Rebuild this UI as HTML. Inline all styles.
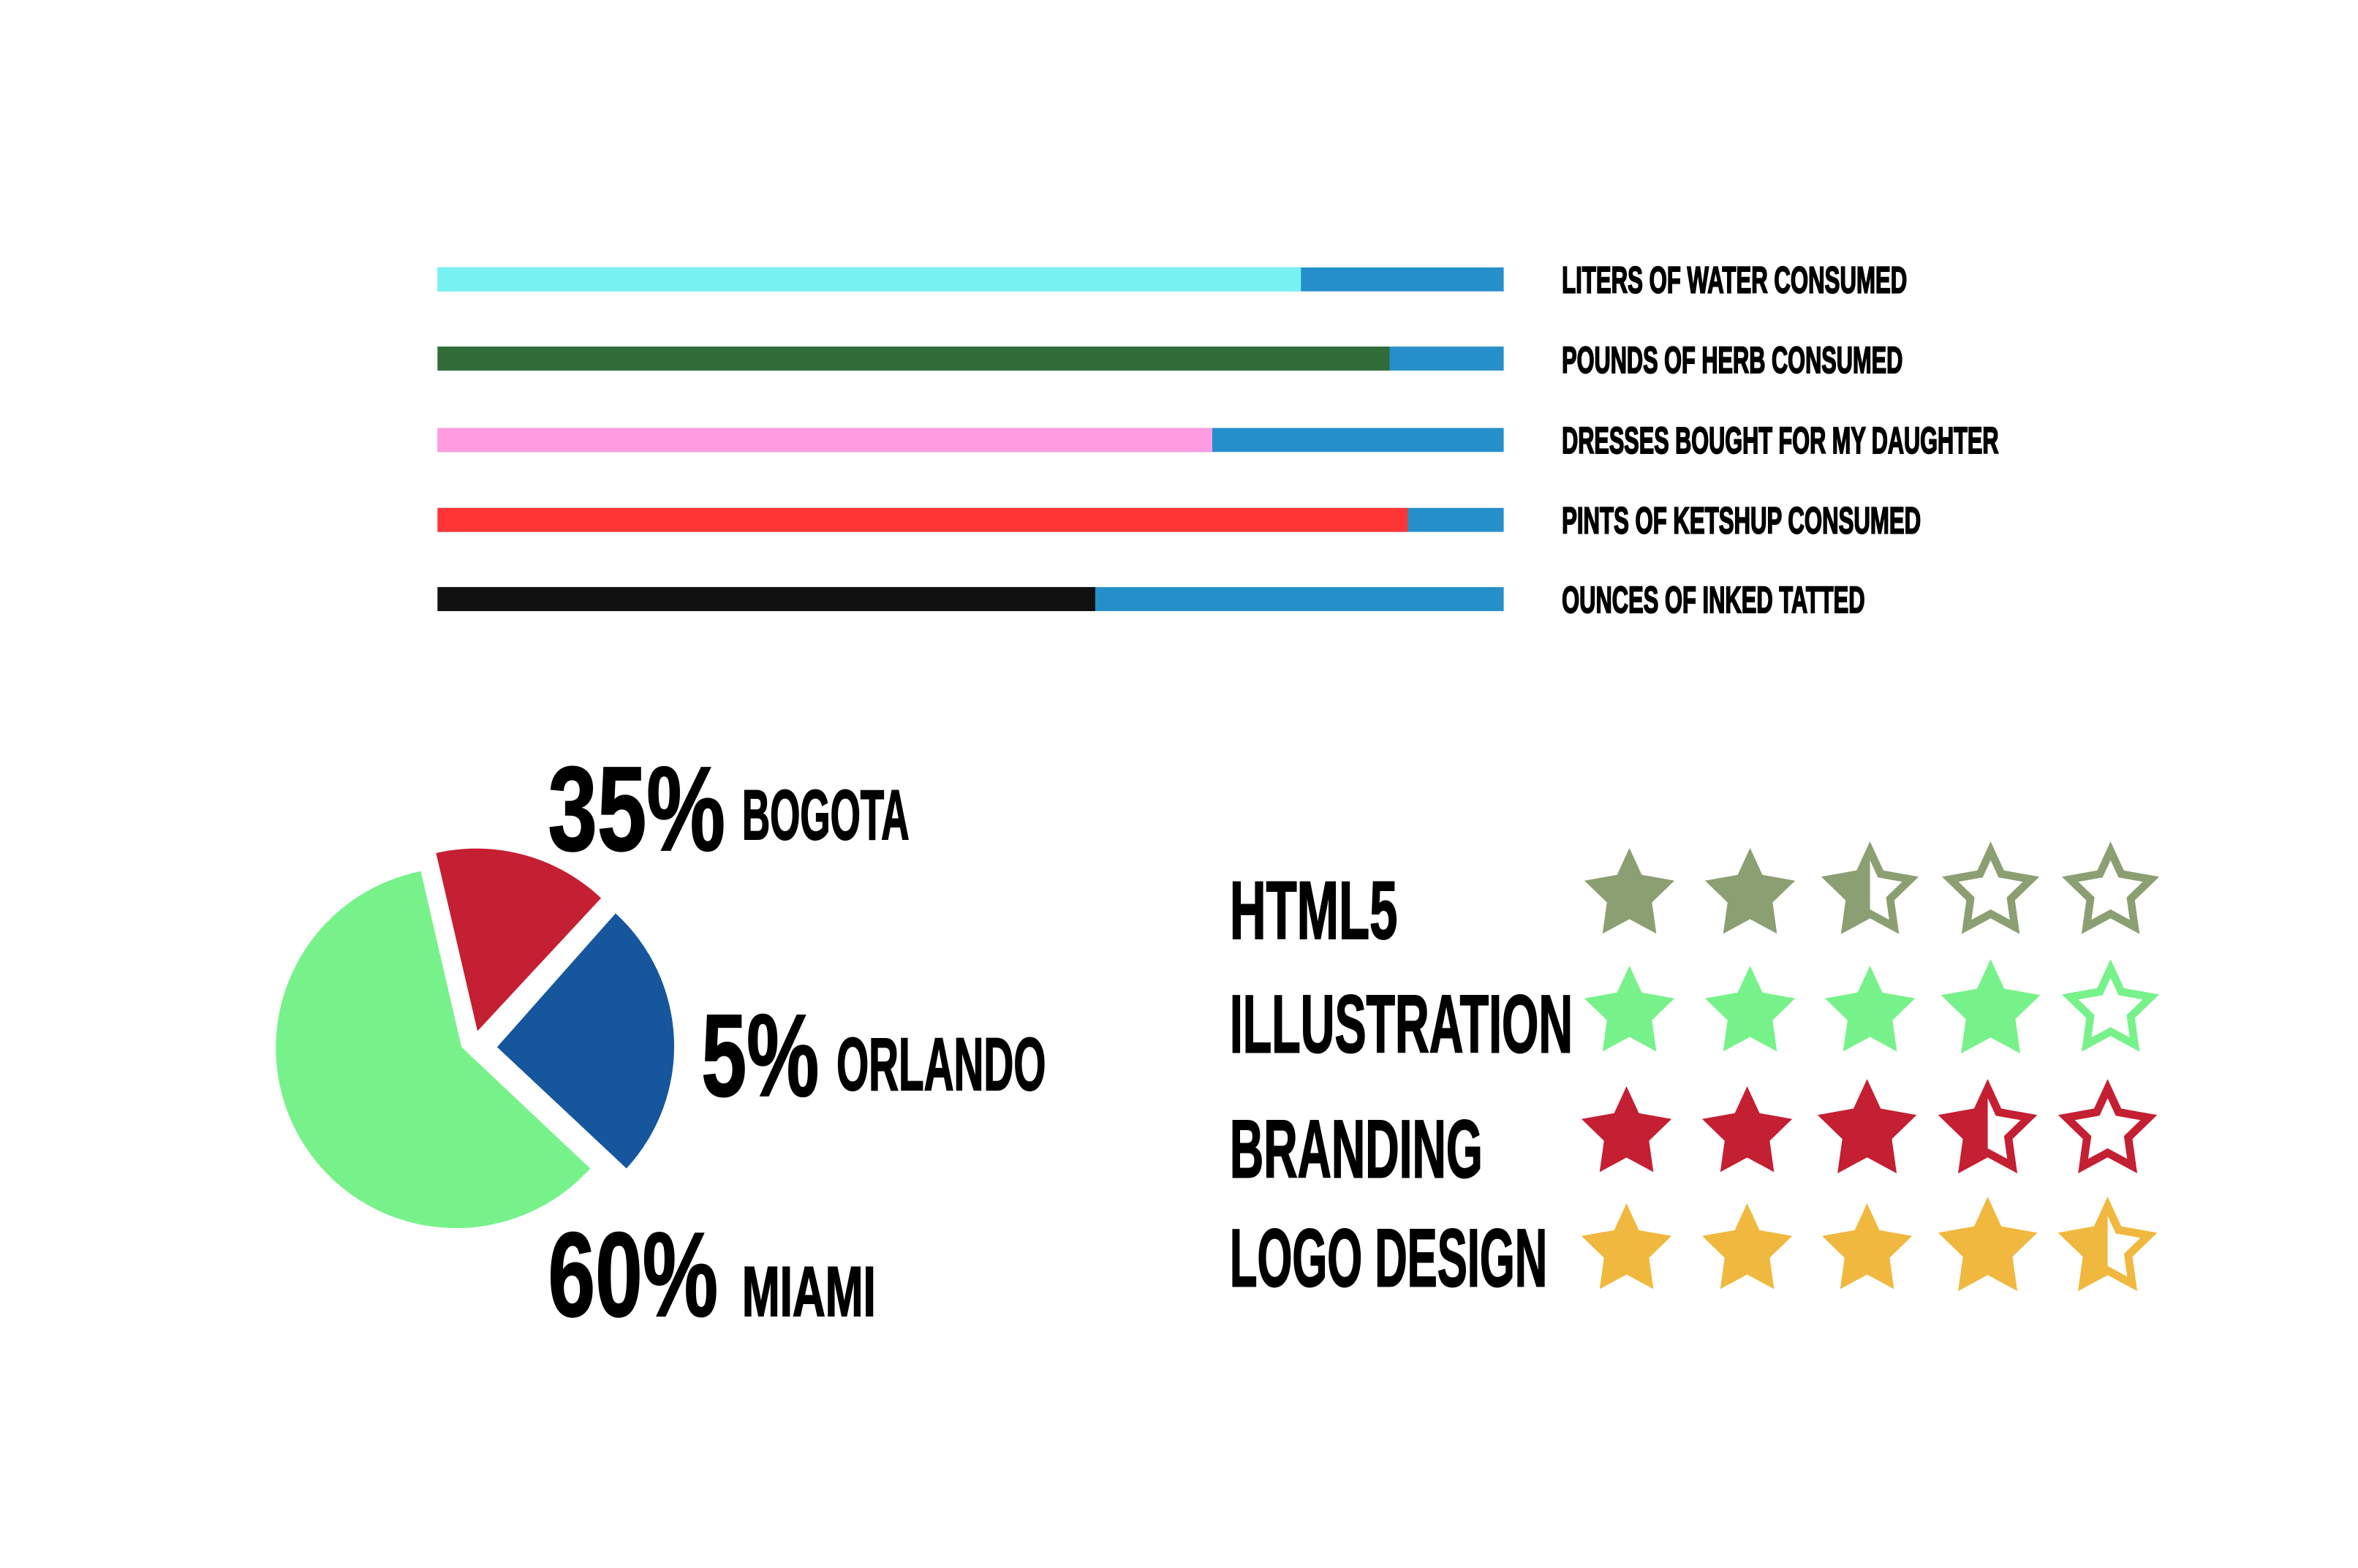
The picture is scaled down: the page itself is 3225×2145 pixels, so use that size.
<!DOCTYPE html>
<html><head><meta charset="utf-8"><style>html,body{margin:0;padding:0;background:#fff}svg{display:block}text{font-family:"Liberation Sans Narrow","Liberation Sans",sans-serif;font-weight:bold;fill:#000;stroke:#000;stroke-width:2}</style></head>
<body>
<svg width="3225" height="2145" viewBox="0 0 3225 2145" xmlns="http://www.w3.org/2000/svg">
<defs>
<path id="st" d="M0,0 L17,37 L62,45 L31,75 L37,118 L0,98 L-37,118 L-31,75 L-62,45 L-17,37 Z"/>
<clipPath id="sc"><use href="#st"/></clipPath>
<clipPath id="lh"><rect x="-80" y="-10" width="80" height="140"/></clipPath>
</defs>
<rect width="3225" height="2145" fill="#fff"/>
<g transform="scale(0.994)">
<rect x="602" y="368" width="1467" height="33" fill="#258fcb"/><rect x="602" y="368" width="1188" height="33" fill="#78f1f3"/>
<rect x="602" y="477" width="1467" height="33" fill="#258fcb"/><rect x="602" y="477" width="1310" height="33" fill="#316b37"/>
<rect x="602" y="589" width="1467" height="33" fill="#258fcb"/><rect x="602" y="589" width="1066" height="33" fill="#fd9ce0"/>
<rect x="602" y="699" width="1467" height="33" fill="#258fcb"/><rect x="602" y="699" width="1335" height="33" fill="#ff3535"/>
<rect x="602" y="808" width="1467" height="33" fill="#258fcb"/><rect x="602" y="808" width="905" height="33" fill="#111"/>
<g font-size="51">
<text x="2149" y="403" textLength="475" lengthAdjust="spacingAndGlyphs">LITERS OF WATER CONSUMED</text>
<text x="2149" y="513" textLength="469" lengthAdjust="spacingAndGlyphs">POUNDS OF HERB CONSUMED</text>
<text x="2149" y="624" textLength="601" lengthAdjust="spacingAndGlyphs">DRESSES BOUGHT FOR MY DAUGHTER</text>
<text x="2149" y="734" textLength="494" lengthAdjust="spacingAndGlyphs">PINTS OF KETSHUP CONSUMED</text>
<text x="2149" y="843" textLength="417" lengthAdjust="spacingAndGlyphs">OUNCES OF INKED TATTED</text>
</g>
<path d="M635,1441 L579,1199 A248,248 0 1 0 812,1608 Z" fill="#77f28a"/>
<path d="M657,1419 L600,1174 A250,250 0 0 1 827,1236 Z" fill="#c41f32"/>
<path d="M684,1441 L847,1257 A248,248 0 0 1 862,1608 Z" fill="#16569c"/>
<text x="754" y="1170" font-size="165" textLength="244" lengthAdjust="spacingAndGlyphs">35%</text>
<text x="1021" y="1155" font-size="97" textLength="230" lengthAdjust="spacingAndGlyphs">BOGOTA</text>
<text x="965" y="1508" font-size="161" textLength="162" lengthAdjust="spacingAndGlyphs">5%</text>
<text x="1151" y="1500" font-size="103" textLength="288" lengthAdjust="spacingAndGlyphs">ORLANDO</text>
<text x="754" y="1811" font-size="165" textLength="234" lengthAdjust="spacingAndGlyphs">60%</text>
<text x="1021" y="1811" font-size="97" textLength="184" lengthAdjust="spacingAndGlyphs">MIAMI</text>
<g transform="translate(7,4)">
<g font-size="113">
<text x="1685" y="1288" textLength="231" lengthAdjust="spacingAndGlyphs">HTML5</text>
<text x="1685" y="1444" textLength="472" lengthAdjust="spacingAndGlyphs">ILLUSTRATION</text>
<text x="1685" y="1616" textLength="348" lengthAdjust="spacingAndGlyphs">BRANDING</text>
<text x="1685" y="1766" textLength="437" lengthAdjust="spacingAndGlyphs">LOGO DESIGN</text>
</g>
<g fill="#8c9f72" stroke="#8c9f72">
<use href="#st" transform="translate(2235,1163)" stroke="none"/>
<use href="#st" transform="translate(2401,1163)" stroke="none"/>
<g transform="translate(2566,1154) scale(1.08)"><use href="#st" fill="none" stroke-width="20" clip-path="url(#sc)"/><use href="#st" stroke="none" clip-path="url(#lh)"/></g>
<g transform="translate(2732,1154) scale(1.08)"><use href="#st" fill="none" stroke-width="20" clip-path="url(#sc)"/></g>
<g transform="translate(2897,1154) scale(1.08)"><use href="#st" fill="none" stroke-width="20" clip-path="url(#sc)"/></g>
</g>
<g fill="#77f28a" stroke="#77f28a">
<use href="#st" transform="translate(2235,1325)" stroke="none"/>
<use href="#st" transform="translate(2401,1325)" stroke="none"/>
<use href="#st" transform="translate(2566,1325)" stroke="none"/>
<use href="#st" transform="translate(2732,1316) scale(1.1)" stroke="none"/>
<g transform="translate(2897,1316) scale(1.08)"><use href="#st" fill="none" stroke-width="20" clip-path="url(#sc)"/></g>
</g>
<g fill="#c41f32" stroke="#c41f32">
<use href="#st" transform="translate(2231,1491)" stroke="none"/>
<use href="#st" transform="translate(2397,1491)" stroke="none"/>
<use href="#st" transform="translate(2562,1481) scale(1.1)" stroke="none"/>
<g transform="translate(2728,1481) scale(1.1)"><use href="#st" fill="none" stroke-width="20" clip-path="url(#sc)"/><use href="#st" stroke="none" clip-path="url(#lh)"/></g>
<g transform="translate(2893,1481) scale(1.1)"><use href="#st" fill="none" stroke-width="20" clip-path="url(#sc)"/></g>
</g>
<g fill="#f0b83e" stroke="#f0b83e">
<use href="#st" transform="translate(2231,1652)" stroke="none"/>
<use href="#st" transform="translate(2397,1652)" stroke="none"/>
<use href="#st" transform="translate(2562,1652)" stroke="none"/>
<use href="#st" transform="translate(2728,1643) scale(1.1)" stroke="none"/>
<g transform="translate(2893,1643) scale(1.1)"><use href="#st" fill="none" stroke-width="20" clip-path="url(#sc)"/><use href="#st" stroke="none" clip-path="url(#lh)"/></g>
</g>
</g>
</g>
</svg>
</body></html>
